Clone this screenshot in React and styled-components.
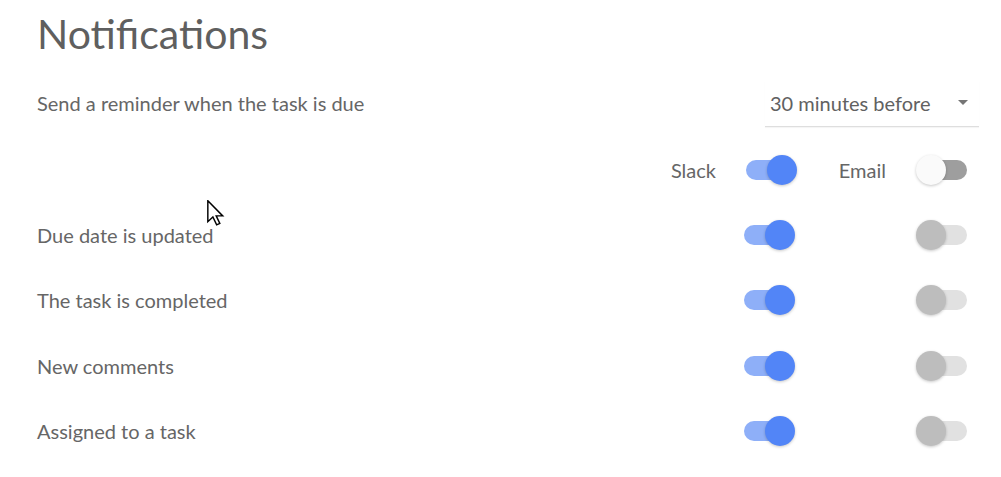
import React from "react";
import styled, { createGlobalStyle } from "styled-components";

const rows = [
  { label: "Due date is updated", slack: true, email: false },
  { label: "The task is completed", slack: true, email: false },
  { label: "New comments", slack: true, email: false },
  { label: "Assigned to a task", slack: true, email: false },
];

const GlobalStyle = createGlobalStyle`
  body {
    margin: 0;
    background: #fff;
    font-family: Lato, "Open Sans", sans-serif;
    color: #666;
  }
`;

const Page = styled.div`
  position: relative;
  padding: 9px 22px 0 37px;
  width: 1001px;
  height: 477px;
  box-sizing: border-box;
`;

const Title = styled.h1`
  margin: 0;
  font-size: 41px;
  font-weight: 400;
  color: #5f5f5f;
  line-height: 50px;
`;

const ReminderRow = styled.div`
  display: flex;
  align-items: flex-start;
  justify-content: space-between;
  margin-top: 22px;
  height: 46px;
`;

const Label = styled.span`
  flex: 1;
  font-size: 20px;
  line-height: 44px;
  color: #666;
`;

const Select = styled.div`
  width: 214px;
  height: 46px;
  box-sizing: border-box;
  display: flex;
  align-items: center;
  justify-content: space-between;
  padding: 0 11px 2px 5px;
  border-bottom: 1px solid #dedede;
  box-shadow: 0 1px 1px rgba(0, 0, 0, 0.04);
  font-size: 20px;
  color: #616161;
`;

const Caret = styled.span`
  width: 0;
  height: 0;
  border-left: 5px solid transparent;
  border-right: 5px solid transparent;
  border-top: 5px solid #757575;
`;

const Table = styled.div`
  margin-top: 10px;
  padding-right: 12px;
`;

const Row = styled.div`
  display: flex;
  align-items: center;
  height: 65.3px;
`;

const Cell = styled.div`
  width: 172px;
  display: flex;
  align-items: center;
  justify-content: flex-end;
  gap: 30px;
  font-size: 20px;
  color: #666;
`;

const Switch = styled.span`
  position: relative;
  display: inline-block;
  width: 51px;
  height: 30px;
  flex-shrink: 0;
  margin-right: ${(p) => p.$shift || 0}px;
`;

const Track = styled.span`
  position: absolute;
  top: 5px;
  left: ${(p) => (p.$on ? 0 : 5)}px;
  width: 46px;
  height: 20px;
  border-radius: 10px;
  background: ${(p) => p.$color};
`;

const Thumb = styled.span`
  position: absolute;
  top: 0;
  left: ${(p) => (p.$on ? 21 : 0)}px;
  width: 30px;
  height: 30px;
  border-radius: 50%;
  background: ${(p) => p.$color};
  box-shadow: 0 1px 3px rgba(0, 0, 0, 0.22);
`;

const Cursor = styled.svg`
  position: absolute;
  left: 207px;
  top: 200px;
`;

const Toggle = ({ on, header, shift }) => {
  const trackColor = on ? "#8eaff8" : header ? "#9e9e9e" : "#e1e1e1";
  const thumbColor = on ? "#5285f7" : header ? "#fafafa" : "#bdbdbd";
  return (
    <Switch $shift={shift}>
      <Track $on={on} $color={trackColor} />
      <Thumb $on={on} $color={thumbColor} />
    </Switch>
  );
};

const App = () => {
  return (
    <Page>
      <GlobalStyle />
      <Title>Notifications</Title>
      <ReminderRow>
        <Label>Send a reminder when the task is due</Label>
        <Select>
          <span>30 minutes before</span>
          <Caret />
        </Select>
      </ReminderRow>
      <Table>
        <Row>
          <Label />
          <Cell>
            Slack
            <Toggle on header shift={-2} />
          </Cell>
          <Cell>
            Email
            <Toggle on={false} header />
          </Cell>
        </Row>
        {rows.map((r) => (
          <Row key={r.label}>
            <Label>{r.label}</Label>
            <Cell>
              <Toggle on={r.slack} />
            </Cell>
            <Cell>
              <Toggle on={r.email} />
            </Cell>
          </Row>
        ))}
      </Table>
      <Cursor width="19" height="26" viewBox="0 0 13 18">
        <path
          d="M0.5 0.5 L0.5 15 L4 11.8 L6.6 17.2 L8.8 16.2 L6.3 11 L10.8 11 Z"
          fill="#fff"
          stroke="#000"
          strokeWidth="1"
          strokeLinejoin="miter"
        />
      </Cursor>
    </Page>
  );
};

export default App;
